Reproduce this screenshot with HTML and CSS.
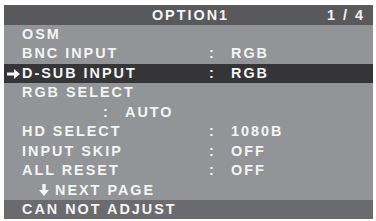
FILE: index.html
```html
<!DOCTYPE html>
<html lang="en">
<head>
<meta charset="UTF-8" />
<title>OSD Option 1</title>
<link rel="stylesheet" href="styles.css">
</head>
<body>
<div class="osd">
  <div class="osd-header">
    <span class="osd-title">OPTION1</span>
    <span class="osd-page">1 / 4</span>
  </div>

  <div class="row"><span class="mark"></span><span class="label">OSM</span></div>
  <div class="row"><span class="mark"></span><span class="label">BNC INPUT</span><span class="colon">:</span><span class="value">RGB</span></div>
  <div class="row selected">
    <span class="mark">
      <svg width="13" height="10" viewBox="0 0 13 10"><path d="M0 3.5H7V0L13 5L7 10V6.5H0Z" fill="#f4f4f4"/></svg>
    </span>
    <span class="label">D-SUB INPUT</span><span class="colon">:</span><span class="value">RGB</span>
  </div>
  <div class="row"><span class="mark"></span><span class="label">RGB SELECT</span></div>
  <div class="row sub"><span class="colon">:</span><span class="value">AUTO</span></div>
  <div class="row"><span class="mark"></span><span class="label">HD SELECT</span><span class="colon">:</span><span class="value">1080B</span></div>
  <div class="row"><span class="mark"></span><span class="label">INPUT SKIP</span><span class="colon">:</span><span class="value">OFF</span></div>
  <div class="row"><span class="mark"></span><span class="label">ALL RESET</span><span class="colon">:</span><span class="value">OFF</span></div>
  <div class="row next">
    <span class="down">
      <svg width="10" height="12" viewBox="0 0 10 12"><path d="M3.3 0H6.7V6H10L5 12L0 6H3.3Z" fill="#f4f4f4"/></svg>
    </span>
    <span>NEXT PAGE</span>
  </div>

  <div class="osd-footer">CAN NOT ADJUST</div>
</div>
</body>
</html>
```

FILE: styles.css
```css
body {
  margin: 0;
  background: #ffffff;
  font-family: "Liberation Sans", Arial, sans-serif;
  font-weight: bold;
  font-size: 14.4px;
  letter-spacing: 2px;
  color: #f4f4f4;
}

.osd {
  margin: 5px 3px 0 4px;
  width: 369px;
  background: #939498;
}

.osd-header {
  position: relative;
  height: 20px;
  line-height: 20px;
  background: #59595b;
  text-align: center;
}

.osd-title {
  padding-left: 4px;
}

.osd-page {
  position: absolute;
  right: 8px;
  top: 0;
}

.row {
  display: grid;
  grid-template-columns: 18px 186px 23px 1fr;
  align-items: center;
  height: 19.45px;
  line-height: 19.45px;
  white-space: nowrap;
}

.row.selected {
  background: #353537;
}

.mark {
  display: flex;
  align-items: center;
  padding-left: 3px;
}

.colon {
  padding-left: 1px;
}

.row.sub {
  grid-template-columns: 98px 23px 1fr;
}

.row.sub .colon {
  grid-column: 2;
}

.row.next {
  display: flex;
  padding-left: 31px;
}

.down {
  display: flex;
  align-items: center;
  width: 20px;
  padding-left: 4px;
  box-sizing: border-box;
}

.osd-footer {
  height: 19px;
  line-height: 19px;
  padding-left: 18px;
  background: #6b6b6f;
}
```
